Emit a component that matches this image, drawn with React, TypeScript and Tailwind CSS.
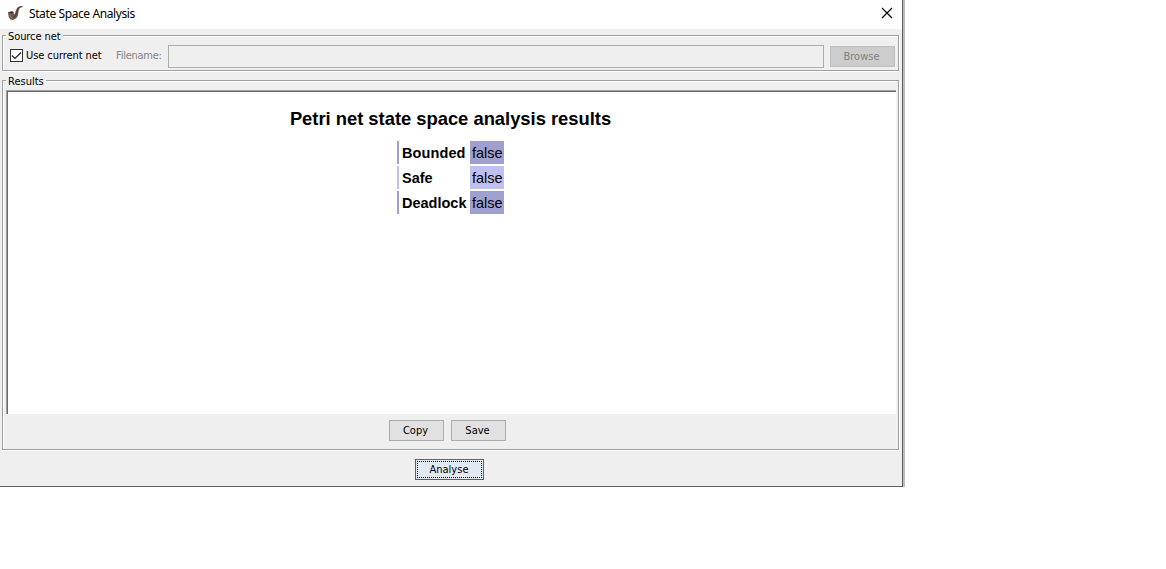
import React from 'react';

const UI = "font-['DejaVu_Sans_Condensed','DejaVu_Sans',sans-serif] [font-stretch:condensed] text-[11px] leading-[13px]";

function Group({ title, titleSpacing, className, children }: { title: string; titleSpacing: string; className: string; children: React.ReactNode }) {
  return (
    <section className={`relative ml-[2px] w-[897px] border border-[#a0a0a0] shadow-[1px_1px_0_#fff,inset_1px_1px_0_#fff] ${className}`}>
      <h2 className={`absolute -top-[6px] left-[3px] whitespace-nowrap bg-[#efefef] px-[2px] text-black ${titleSpacing}`}>{title}</h2>
      {children}
    </section>
  );
}

function PipeIcon() {
  return (
    <svg width="16" height="16" viewBox="0 0 16 16" className="shrink-0">
      <path d="M15.6 0.8 12.2 1.4 10 3 8.6 6.6 7.6 9.2 6.8 9V7L5 6.2 1.4 7 1 8.2 1.8 12 3.4 14.4 6 15 9 13.6 10.8 11 11.6 6 12.8 3 15.6 1.9Z" fill="#6d5651" />
      <path d="M1.2 7.4 4.8 6.4 6.8 7.2 4.4 8.4Z" fill="#3e302e" />
      <path d="M3 9.2 3.8 12.2 5.6 13.4" stroke="#927972" strokeWidth="1" fill="none" />
      <path d="M6.4 12.4 9 10.4 10 6.8 11.2 3.2 13.4 1.8" stroke="#493836" strokeWidth="1" fill="none" />
    </svg>
  );
}

const rows = [
  { name: 'Bounded', value: 'false', cell: 'bg-[#a0a0d0]', edge: 'border-[#a0a0d0]', spacing: 'tracking-[0.1px]' },
  { name: 'Safe', value: 'false', cell: 'bg-[#c0c0f0]', edge: 'border-[#c0c0f0]', spacing: 'tracking-[0px]' },
  { name: 'Deadlock', value: 'false', cell: 'bg-[#a0a0d0]', edge: 'border-[#a0a0d0]', spacing: 'tracking-[0px]' },
];

export default function App() {
  return (
    <main className={`h-[569px] w-[1166px] overflow-hidden bg-white ${UI}`}>
      <div className="flex h-[487px] w-[905px]">
        <div className="flex h-[487px] w-[903px] flex-col border-r border-b border-[#5e5e5e] bg-[#efefef]">
          <header className="flex h-[29px] shrink-0 items-start bg-white pl-[7px] pt-[5px]">
            <PipeIcon />
            <h1 className="ml-[6px] mt-[1px] w-[110px] whitespace-nowrap font-['Noto_Sans',sans-serif] text-[12px] leading-[16px] tracking-[-0.4px] text-black [font-stretch:normal]">State Space Analysis</h1>
            <button aria-label="Close" className="ml-auto mr-[9px] mt-[2px]">
              <svg width="12" height="12" viewBox="0 0 12 12"><path d="M1 1 11 11M11 1 1 11" stroke="#000" strokeWidth="1.15" /></svg>
            </button>
          </header>

          <Group title="Source net" titleSpacing="tracking-[-0.08px]" className="mt-[6px] h-[36px] shrink-0">
            <div className="flex h-full items-center pl-[7px] pr-[3px] pt-[6px]">
              <span className="-mt-[1px] flex h-[13px] w-[13px] items-center justify-center border border-[#333] bg-white">
                <svg width="11" height="11" viewBox="0 0 11 11" className="shrink-0"><path d="M1 5.5 4 8.5 10 2.5" fill="none" stroke="#222" strokeWidth="1.2" /></svg>
              </span>
              <span className="-mt-[1px] ml-[3px] w-[90px] whitespace-nowrap tracking-[-0.07px] text-black">Use current net</span>
              <span className="-mt-[1px] w-[52px] whitespace-nowrap tracking-[-0.25px] text-[#858585]">Filename:</span>
              <span className="h-[23px] w-[656px] border border-[#abadb3]" />
              <button className="ml-[6px] h-[21px] w-[65px] border border-[#bfbfbf] bg-[#cccccc] pr-[2px] text-[#838383]">Browse</button>
            </div>
          </Group>

          <Group title="Results" titleSpacing="tracking-[0px]" className="mt-[9px] h-[370px] shrink-0">
            <div className="ml-[3px] mt-[9px] h-[324px] w-[890px] border-t border-l border-[#a0a0a0]">
              <div className="flex h-full flex-col items-center border-t border-l border-[#696969] bg-white pr-[3px] font-['Liberation_Sans',Arial,sans-serif] text-black [font-stretch:normal]">
                <h2 className="mt-[16px] whitespace-nowrap text-[18.4px] font-bold leading-[22px] tracking-[-0.02px]">Petri net state space analysis results</h2>
                <div className="mt-[11px] flex w-[107px] flex-col gap-[2px] text-[14.5px]">
                  {rows.map((r) => (
                    <div key={r.name} className="flex h-[23px] items-center">
                      <span className={`h-[23px] w-[73px] whitespace-nowrap border-l-2 pl-[3px] font-bold leading-[24px] ${r.edge} ${r.spacing}`}>{r.name}</span>
                      <span className={`h-[23px] w-[34px] pl-[2px] leading-[24px] ${r.cell}`}>{r.value}</span>
                    </div>
                  ))}
                </div>
              </div>
            </div>
            <div className="mt-[6px] flex gap-[7px] pl-[386px] text-black">
              <button className="h-[21px] w-[55px] border border-[#adadad] bg-[#e1e1e1] pr-[2px]">Copy</button>
              <button className="h-[21px] w-[55px] border border-[#adadad] bg-[#e1e1e1] pr-[2px]">Save</button>
            </div>
          </Group>

          <button className="ml-[415px] mt-[9px] flex h-[21px] w-[69px] items-center justify-center border border-[#0078d7] bg-[#e1eaf2] p-[1px] text-black">
            <span className="flex h-full w-full items-center justify-center border border-dotted border-black pr-[1px]">Analyse</span>
          </button>
        </div>
        <div className="h-full w-[2px] bg-[#bdbdbd]" />
      </div>
    </main>
  );
}
